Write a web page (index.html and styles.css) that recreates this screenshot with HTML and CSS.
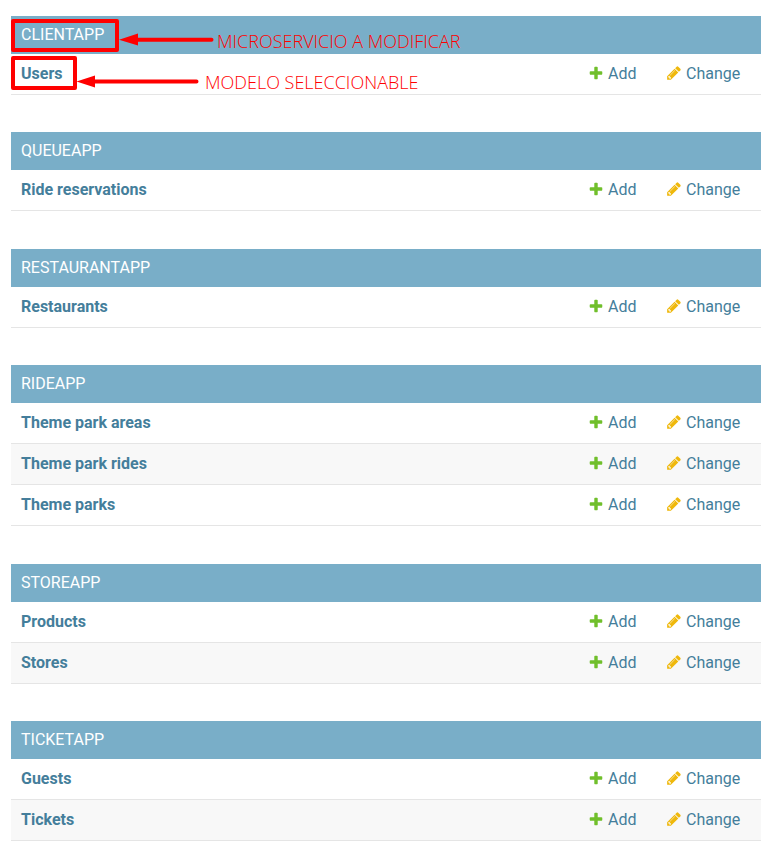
FILE: index.html
```html
<!DOCTYPE html>
<html lang="en">
<head>
<meta charset="utf-8">
<meta name="viewport" content="width=device-width, initial-scale=1">
<title>Site administration</title>
<link rel="stylesheet" href="styles.css">
</head>
<body>
<svg class="sprite" aria-hidden="true">
  <symbol id="plus" viewBox="0 0 1792 1792"><path fill="#70bf2b" d="M1600 796v192q0 40-28 68t-68 28h-416v416q0 40-28 68t-68 28H800q-40 0-68-28t-28-68v-416H288q-40 0-68-28t-28-68V796q0-40 28-68t68-28h416V284q0-40 28-68t68-28h192q40 0 68 28t28 68v416h416q40 0 68 28t28 68z"/></symbol>
  <symbol id="pencil" viewBox="0 0 1792 1792"><path fill="#efb80b" d="M491 1536l91-91-235-235-91 91v107h128v128h107zm523-928q0-22-22-22-10 0-17 7l-542 542q-7 7-7 17 0 22 22 22 10 0 17-7l542-542q7-7 7-17zm-54-192l416 416-832 832H128v-416zm683 96q0 53-37 90l-166 166-416-416 166-165q36-38 90-38 53 0 91 38l235 234q37 39 37 91z"/></symbol>
</svg>
<main class="app-list">
  <table class="module">
    <caption><a href="#">Clientapp</a></caption>
    <tr><th scope="row"><a href="#">Users</a></th><td class="add"><a class="action" href="#"><svg class="icon"><use href="#plus"/></svg>Add</a></td><td class="change"><a class="action" href="#"><svg class="icon"><use href="#pencil"/></svg>Change</a></td></tr>
  </table>
  <table class="module">
    <caption><a href="#">Queueapp</a></caption>
    <tr><th scope="row"><a href="#">Ride reservations</a></th><td class="add"><a class="action" href="#"><svg class="icon"><use href="#plus"/></svg>Add</a></td><td class="change"><a class="action" href="#"><svg class="icon"><use href="#pencil"/></svg>Change</a></td></tr>
  </table>
  <table class="module">
    <caption><a href="#">Restaurantapp</a></caption>
    <tr><th scope="row"><a href="#">Restaurants</a></th><td class="add"><a class="action" href="#"><svg class="icon"><use href="#plus"/></svg>Add</a></td><td class="change"><a class="action" href="#"><svg class="icon"><use href="#pencil"/></svg>Change</a></td></tr>
  </table>
  <table class="module">
    <caption><a href="#">Rideapp</a></caption>
    <tr><th scope="row"><a href="#">Theme park areas</a></th><td class="add"><a class="action" href="#"><svg class="icon"><use href="#plus"/></svg>Add</a></td><td class="change"><a class="action" href="#"><svg class="icon"><use href="#pencil"/></svg>Change</a></td></tr>
    <tr><th scope="row"><a href="#">Theme park rides</a></th><td class="add"><a class="action" href="#"><svg class="icon"><use href="#plus"/></svg>Add</a></td><td class="change"><a class="action" href="#"><svg class="icon"><use href="#pencil"/></svg>Change</a></td></tr>
    <tr><th scope="row"><a href="#">Theme parks</a></th><td class="add"><a class="action" href="#"><svg class="icon"><use href="#plus"/></svg>Add</a></td><td class="change"><a class="action" href="#"><svg class="icon"><use href="#pencil"/></svg>Change</a></td></tr>
  </table>
  <table class="module">
    <caption><a href="#">Storeapp</a></caption>
    <tr><th scope="row"><a href="#">Products</a></th><td class="add"><a class="action" href="#"><svg class="icon"><use href="#plus"/></svg>Add</a></td><td class="change"><a class="action" href="#"><svg class="icon"><use href="#pencil"/></svg>Change</a></td></tr>
    <tr><th scope="row"><a href="#">Stores</a></th><td class="add"><a class="action" href="#"><svg class="icon"><use href="#plus"/></svg>Add</a></td><td class="change"><a class="action" href="#"><svg class="icon"><use href="#pencil"/></svg>Change</a></td></tr>
  </table>
  <table class="module">
    <caption><a href="#">Ticketapp</a></caption>
    <tr><th scope="row"><a href="#">Guests</a></th><td class="add"><a class="action" href="#"><svg class="icon"><use href="#plus"/></svg>Add</a></td><td class="change"><a class="action" href="#"><svg class="icon"><use href="#pencil"/></svg>Change</a></td></tr>
    <tr><th scope="row"><a href="#">Tickets</a></th><td class="add"><a class="action" href="#"><svg class="icon"><use href="#plus"/></svg>Add</a></td><td class="change"><a class="action" href="#"><svg class="icon"><use href="#pencil"/></svg>Change</a></td></tr>
  </table>
</main>
<svg class="marks" width="220" height="100" viewBox="0 0 220 100" aria-hidden="true">
  <g fill="none" stroke="#f00" stroke-width="4" stroke-linejoin="round" stroke-linecap="round">
    <rect x="13" y="21" width="104" height="29"/>
    <rect x="13" y="58" width="62" height="30"/>
    <path d="M134 39.7H211.5M92 81.5H196.5"/>
  </g>
  <path fill="#f00" d="M119 39.7L138 33.5V45.5ZM76.5 81.5L95 75.5V87.5Z"/>
</svg>
<span class="note note-app">MICROSERVICIO A MODIFICAR</span>
<span class="note note-model">MODELO SELECCIONABLE</span>
</body>
</html>
```
FILE: styles.css
```css
body {
  position: relative;
  margin: 0;
  padding: 16px 20px 11px 11px;
  background: #fff;
  color: #333;
  font: 16px/20px Roboto, "Liberation Sans", sans-serif;
}

a {
  color: #447e9b;
  text-decoration: none;
}

.sprite {
  position: absolute;
  width: 0;
  height: 0;
}

.module {
  width: 100%;
  margin-bottom: 37px;
  table-layout: fixed;
  border-spacing: 0;
}

.module:nth-child(even) {
  margin-bottom: 38px;
}

.module:last-child {
  margin-bottom: 0;
}

.module caption {
  padding: 9px 10px;
  background: #79aec8;
  text-align: left;
  text-transform: uppercase;
}

.module caption a {
  color: #fff;
}

.module th,
.module td {
  padding: 10px;
  border-bottom: 1px solid #e5e5e5;
  text-align: left;
}

.module th {
  font-weight: 700;
}

.module tr:nth-child(even) {
  background: #f8f8f8;
}

.module .add {
  width: 58px;
}

.module .change {
  width: 85px;
}

.action {
  display: flex;
  align-items: center;
  gap: 4px;
}

.icon {
  width: 16px;
  height: 16px;
  margin-bottom: 2px;
}

.marks {
  position: absolute;
  top: 0;
  left: 0;
  pointer-events: none;
}

.note {
  position: absolute;
  color: #f00;
  font: 300 18px/24px "Open Sans", Lato, sans-serif;
  white-space: nowrap;
}

.note-app {
  top: 29px;
  left: 217px;
}

.note-model {
  top: 70px;
  left: 205px;
}
```
